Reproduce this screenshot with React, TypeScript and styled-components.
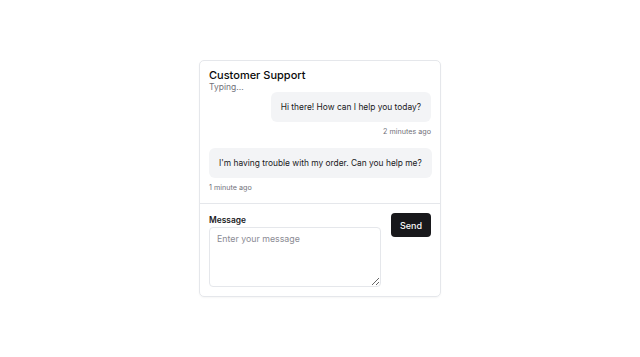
import styled, { createGlobalStyle } from "styled-components";

const GlobalStyle = createGlobalStyle`
  html, body {
    margin: 0;
    padding: 0;
    background: #fff;
    font-family: Inter, "Liberation Sans", sans-serif;
    color: #0a0a0a;
  }
`;

const messages = [
  { text: "Hi there! How can I help you today?", time: "2 minutes ago", mine: false },
  { text: "I'm having trouble with my order. Can you help me?", time: "1 minute ago", mine: true },
];

export default function App() {
  return (
    <>
      <GlobalStyle />
      <Page>
        <Card>
          <Header>
            <Title>Customer Support</Title>
            <Status>Typing...</Status>
          </Header>
          <Thread>
            {messages.map((m) => (
              <Message key={m.time} $left={m.mine}>
                <Bubble>{m.text}</Bubble>
                <Time>{m.time}</Time>
              </Message>
            ))}
          </Thread>
          <Footer>
            <Field>
              <Label htmlFor="msg">Message</Label>
              <TextArea id="msg" placeholder="Enter your message" />
            </Field>
            <SendButton>Send</SendButton>
          </Footer>
        </Card>
      </Page>
    </>
  );
}

const Page = styled.div`
  height: 357px;
  display: flex;
  align-items: center;
  justify-content: center;
`;

const Card = styled.div`
  width: 242px;
  box-sizing: border-box;
  border: 1px solid #e5e7eb;
  border-radius: 5px;
  box-shadow: 0 1px 2px rgba(0, 0, 0, 0.04);
  display: flex;
  flex-direction: column;
`;

const Header = styled.div`
  padding: 7px 9px 0;
  display: flex;
  flex-direction: column;
`;

const Title = styled.div`
  font-size: 11px;
  font-weight: 500;
  line-height: 14px;
`;

const Status = styled.div`
  font-size: 8.5px;
  color: #71717a;
  line-height: 10px;
`;

const Thread = styled.div`
  padding: 0 9px 10px;
  display: flex;
  flex-direction: column;
  gap: 11px;
  border-bottom: 1px solid #e5e7eb;
`;

const Message = styled.div<{ $left: boolean }>`
  display: flex;
  flex-direction: column;
  align-items: ${(p) => (p.$left ? "flex-start" : "flex-end")};
  gap: 5px;
`;

const Bubble = styled.div`
  background: #f3f4f6;
  border-radius: 6px;
  padding: 9px 10px;
  font-size: 8.4px;
  line-height: 12px;
  color: #18181b;
  white-space: nowrap;
`;

const Time = styled.div`
  font-size: 7.2px;
  line-height: 10px;
  color: #71717a;
`;

const Footer = styled.div`
  padding: 9px;
  display: flex;
  gap: 10px;
  align-items: flex-start;
`;

const Field = styled.div`
  flex: 1;
  display: flex;
  flex-direction: column;
  gap: 1px;
  padding-top: 1px;
`;

const Label = styled.label`
  font-size: 8.4px;
  font-weight: 600;
  line-height: 12px;
  color: #18181b;
`;

const TextArea = styled.textarea`
  display: block;
  height: 60px;
  box-sizing: border-box;
  border: 1px solid #e5e7eb;
  border-radius: 4px;
  padding: 5px 7px;
  font-family: Inter, "Liberation Sans", sans-serif;
  font-size: 8.8px;
  color: #18181b;
  outline: none;
  &::placeholder {
    color: #8b8b94;
  }
`;

const SendButton = styled.button`
  width: 40px;
  height: 24px;
  border: none;
  border-radius: 4px;
  background: #18181b;
  color: #fafafa;
  font-family: Inter, "Liberation Sans", sans-serif;
  font-size: 9px;
  font-weight: 500;
  cursor: pointer;
`;
